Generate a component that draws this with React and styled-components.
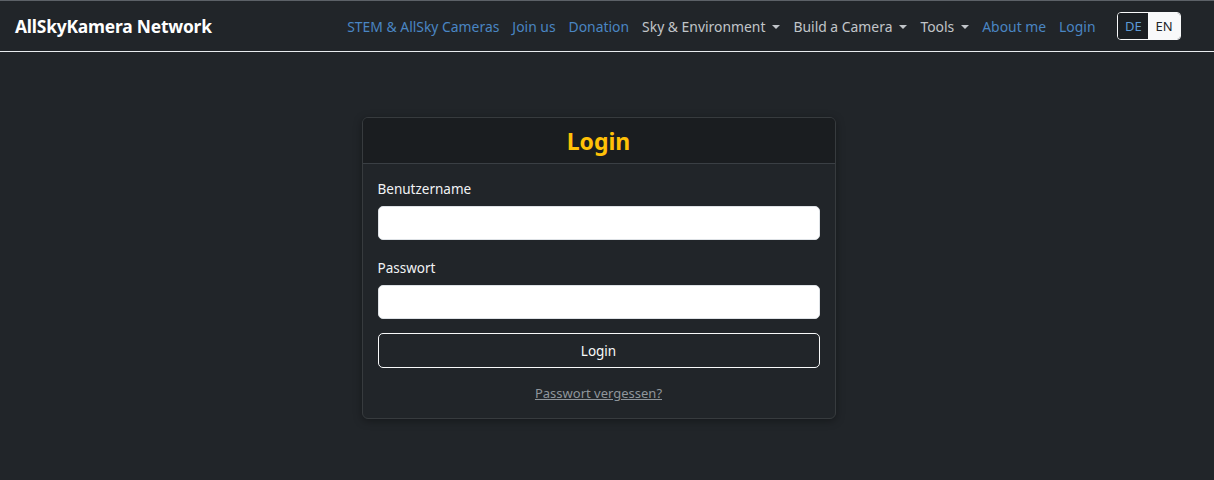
import React from "react";
import styled, { createGlobalStyle } from "styled-components";

const GlobalStyle = createGlobalStyle`
  html, body {
    margin: 0;
    padding: 0;
    background: #212529;
    font-family: "Noto Sans", "Open Sans", sans-serif;
    color: #dee2e6;
  }
  * { box-sizing: border-box; }
`;

const Page = styled.div`
  min-height: 480px;
  background: #212529;
  border-top: 1px solid #5c6167;
`;

const Navbar = styled.nav`
  height: 51px;
  display: flex;
  align-items: center;
  justify-content: space-between;
  padding: 0 33px 0 15px;
  border-bottom: 1px solid #e9ecef;
`;

const Brand = styled.a`
  font-size: 17.4px;
  font-weight: 700;
  color: #fff;
  text-decoration: none;
  letter-spacing: -0.2px;
`;

const NavList = styled.ul`
  display: flex;
  align-items: center;
  list-style: none;
  margin: 0;
  padding: 0;
`;

const NavItem = styled.li`
  padding: 0 6.5px;
`;

const NavLink = styled.a`
  font-size: 13.9px;
  color: ${({ $dropdown }) => ($dropdown ? "#c1c5c9" : "#4a86c3")};
  text-decoration: none;
  display: inline-flex;
  align-items: center;
  white-space: nowrap;
`;

const Caret = styled.span`
  display: inline-block;
  margin-left: 7px;
  border-top: 4px solid currentColor;
  border-left: 4px solid transparent;
  border-right: 4px solid transparent;
`;

const LangGroup = styled.div`
  display: flex;
  margin-left: 15px;
  border-radius: 4px;
  overflow: hidden;
  border: 1px solid #f8f9fa;
`;

const LangButton = styled.button`
  font-family: inherit;
  font-size: 13px;
  height: 26px;
  padding: 0 7px;
  border: none;
  cursor: pointer;
  background: ${({ $active }) => ($active ? "#1b1f23" : "#f8f9fa")};
  color: ${({ $active }) => ($active ? "#5d9ad6" : "#212529")};
  width: ${({ $active }) => ($active ? "30px" : "32px")};
`;

const Main = styled.main`
  display: flex;
  justify-content: center;
  padding: 65px 17px 0 0;
`;

const Card = styled.div`
  width: 474px;
  border: 1px solid #373b3e;
  border-radius: 6px;
  background: #212529;
  box-shadow: 0 2px 8px rgba(0, 0, 0, 0.35);
  overflow: hidden;
`;

const CardHeader = styled.div`
  background: #1a1d20;
  border-bottom: 1px solid #3a3f44;
  height: 46px;
  display: flex;
  align-items: center;
  justify-content: center;
`;

const Title = styled.h2`
  margin: 0;
  font-size: 23px;
  font-weight: 700;
  color: #ffc107;
`;

const CardBody = styled.form`
  padding: 16px 15px 16px;
  display: flex;
  flex-direction: column;
`;

const Label = styled.label`
  font-size: 13.5px;
  color: #f1f3f5;
  margin-bottom: 8px;
  line-height: 18px;
`;

const Input = styled.input`
  height: 34px;
  border: 1px solid #dee2e6;
  border-radius: 5px;
  background: #fff;
  margin-bottom: ${({ $last }) => ($last ? "14px" : "19px")};
  padding: 0 10px;
  font-family: inherit;
`;

const Button = styled.button`
  height: 35px;
  background: transparent;
  border: 1px solid #f8f9fa;
  border-radius: 5px;
  color: #f8f9fa;
  font-family: inherit;
  font-size: 13.5px;
  cursor: pointer;
`;

const Forgot = styled.a`
  align-self: center;
  margin-top: 16px;
  font-size: 13px;
  color: #8f959b;
  text-decoration: underline;
`;

const links = [
  { label: "STEM & AllSky Cameras" },
  { label: "Join us" },
  { label: "Donation" },
  { label: "Sky & Environment", dropdown: true },
  { label: "Build a Camera", dropdown: true },
  { label: "Tools", dropdown: true },
  { label: "About me" },
  { label: "Login" },
];

export default function App() {
  return (
    <>
      <GlobalStyle />
      <Page>
        <Navbar>
          <Brand href="#">AllSkyKamera Network</Brand>
          <NavList>
            {links.map((l) => (
              <NavItem key={l.label}>
                <NavLink href="#" $dropdown={l.dropdown}>
                  {l.label}
                  {l.dropdown && <Caret />}
                </NavLink>
              </NavItem>
            ))}
            <LangGroup>
              <LangButton $active>DE</LangButton>
              <LangButton>EN</LangButton>
            </LangGroup>
          </NavList>
        </Navbar>
        <Main>
          <Card>
            <CardHeader>
              <Title>Login</Title>
            </CardHeader>
            <CardBody onSubmit={(e) => e.preventDefault()}>
              <Label>Benutzername</Label>
              <Input type="text" />
              <Label>Passwort</Label>
              <Input type="password" $last />
              <Button type="submit">Login</Button>
              <Forgot href="#">Passwort vergessen?</Forgot>
            </CardBody>
          </Card>
        </Main>
      </Page>
    </>
  );
}
